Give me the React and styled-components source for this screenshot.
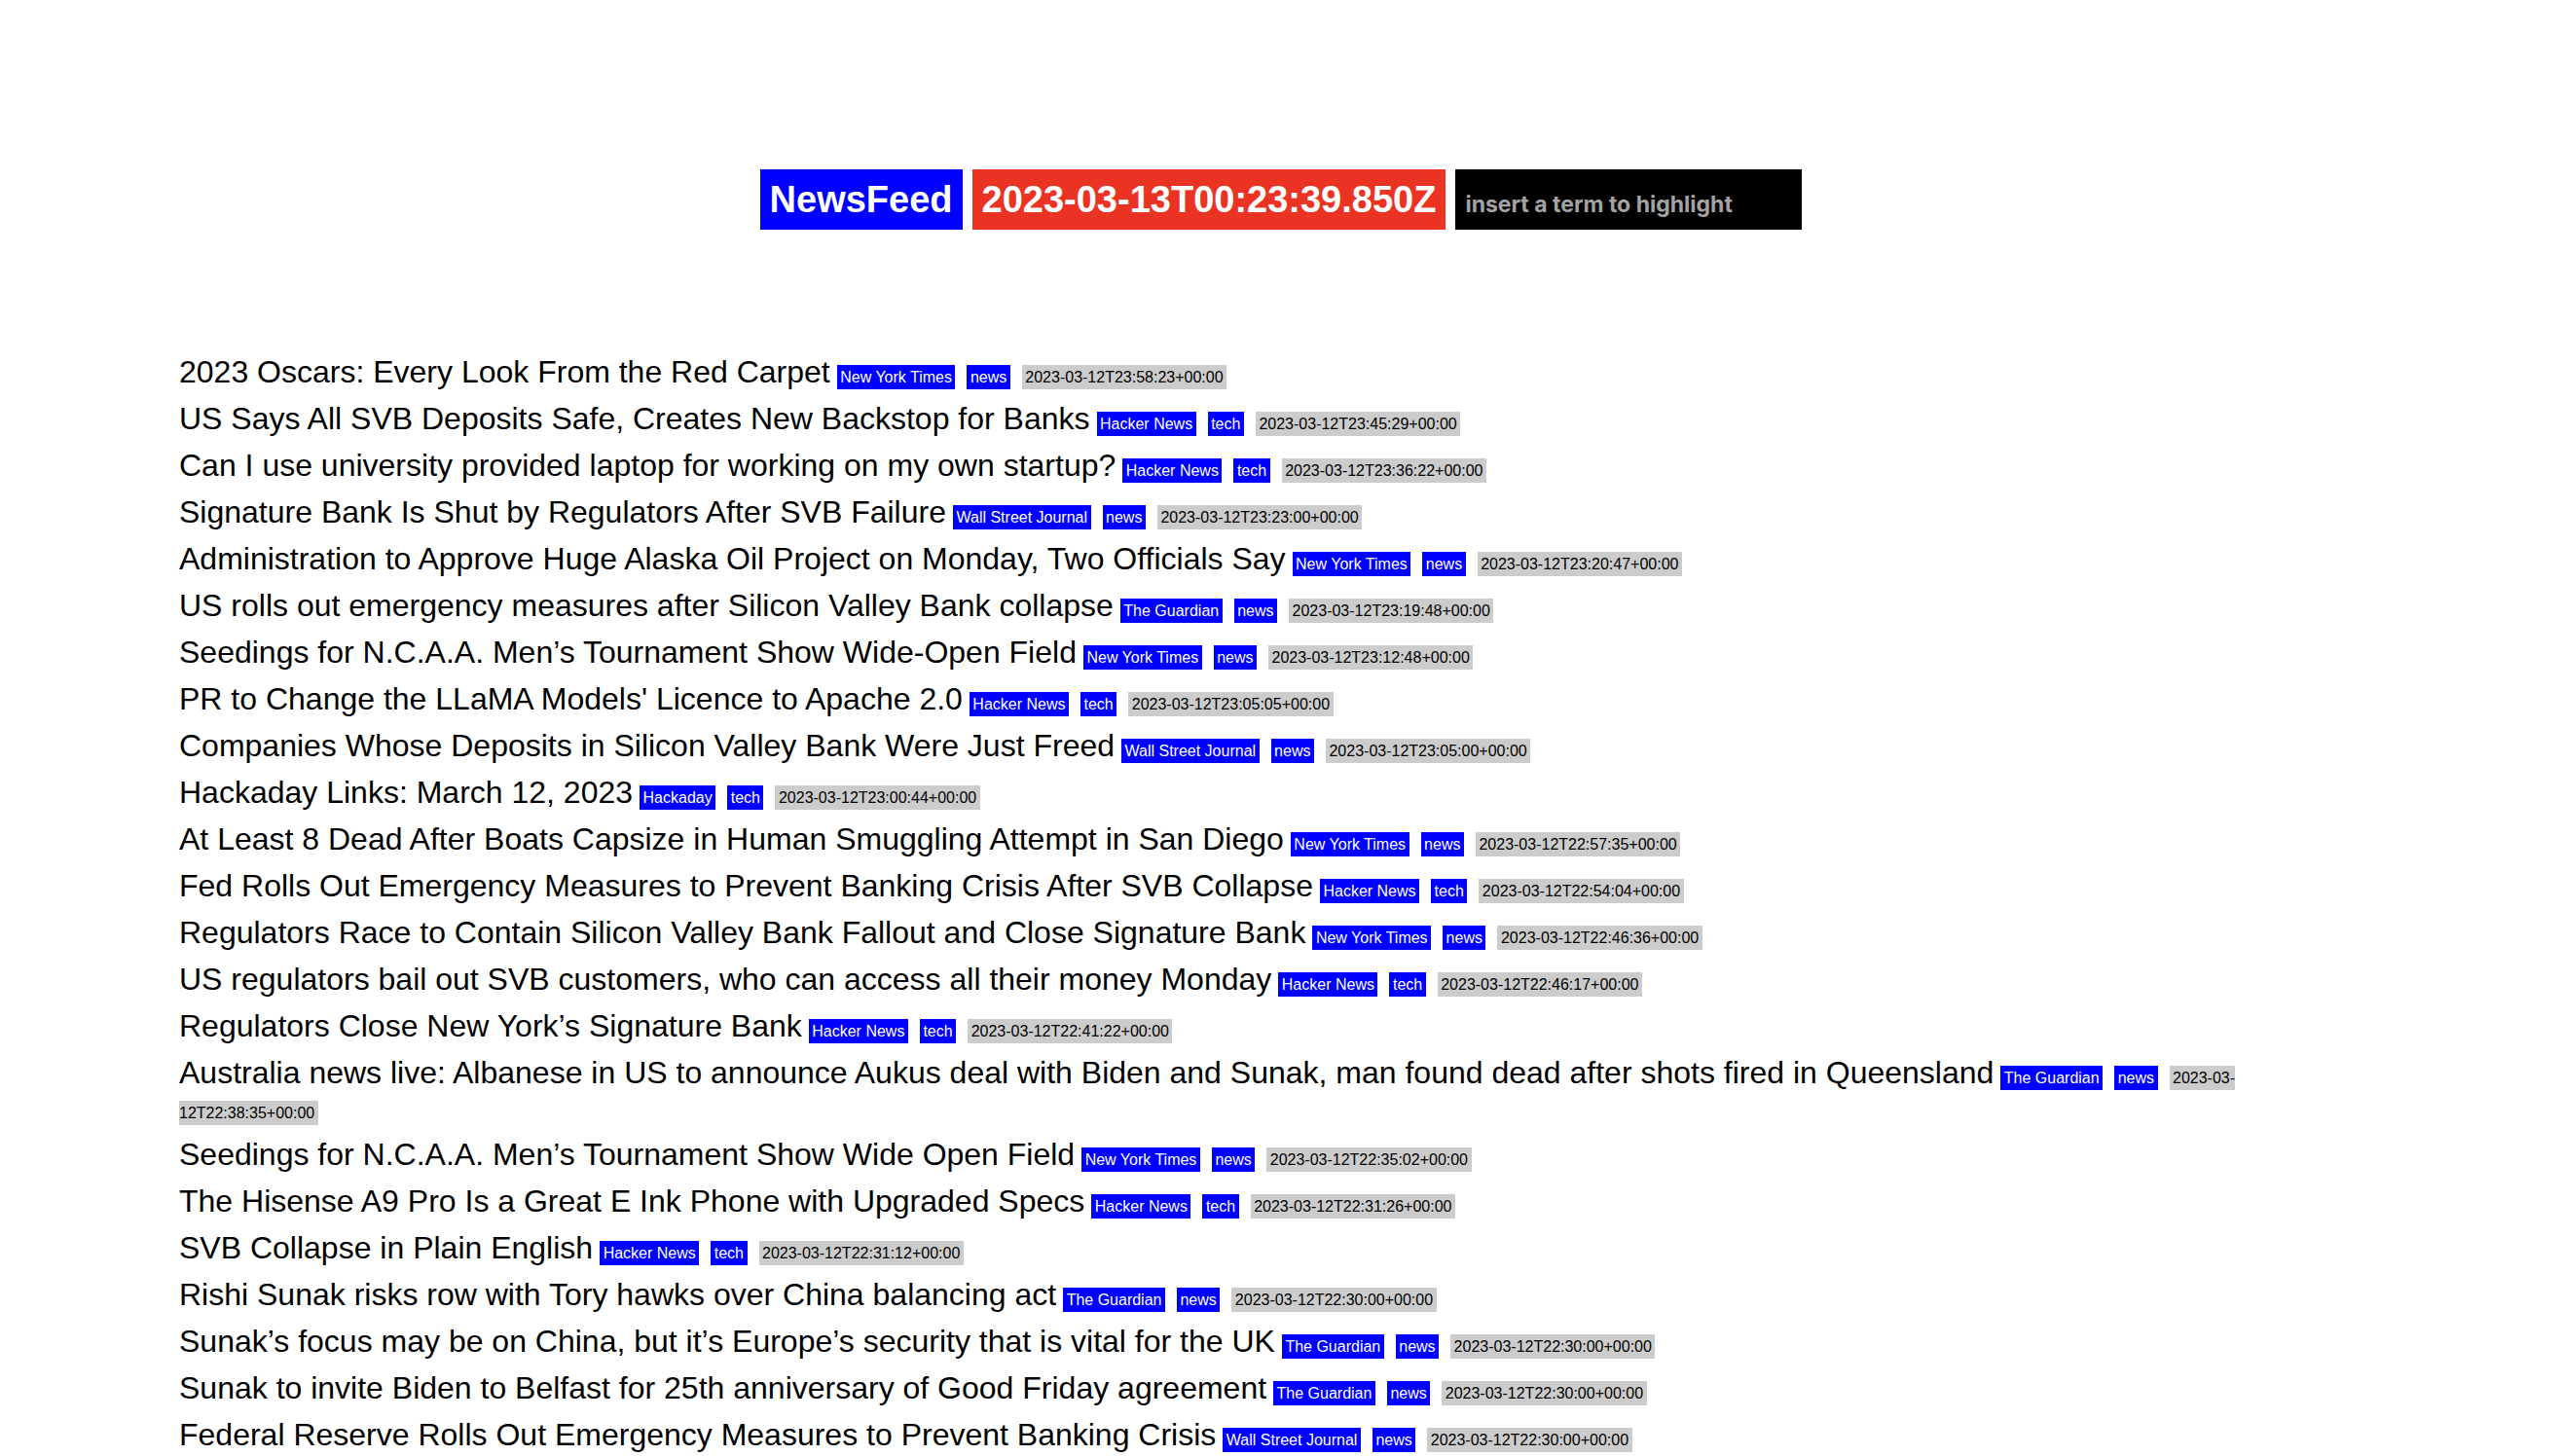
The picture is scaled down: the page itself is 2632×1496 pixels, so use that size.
import React from "react";
import styled, { createGlobalStyle } from "styled-components";

const GlobalStyle = createGlobalStyle`
  html, body {
    margin: 0;
    padding: 0;
    background: #ffffff;
    overflow: hidden;
  }
  body {
    font-family: "Liberation Sans", Arial, Helvetica, sans-serif;
    color: #000000;
  }
`;

const Page = styled.div`
  padding-top: 174px;
`;

const Header = styled.header`
  display: flex;
  justify-content: center;
  align-items: stretch;
  gap: 10px;
  height: 62px;
`;

const Badge = styled.div`
  display: flex;
  align-items: center;
  padding: 0 10px;
  background: ${(p) => p.$bg};
  color: #ffffff;
  font-family: "Liberation Sans", Arial, Helvetica, sans-serif;
  font-weight: 700;
  font-size: 38px;
  white-space: nowrap;
`;

const Search = styled.input`
  box-sizing: border-box;
  width: 356px;
  height: 62px;
  border: none;
  outline: none;
  background: #000000;
  color: #ffffff;
  padding: 10px 10px 0;
  font-family: Inter, "Noto Sans", sans-serif;
  font-weight: 700;
  font-size: 23px;
  &::placeholder {
    color: #a3a3a3;
  }
`;

const List = styled.ul`
  list-style: none;
  margin: 127.5px 0 0;
  padding: 0 232px 0 184px;
`;

const Item = styled.li`
  font-size: 32px;
  line-height: 36px;
  margin: 0 0 12px;
`;

const Title = styled.span`
  color: #000000;
`;

const Tag = styled.span`
  font-size: 16px;
  line-height: normal;
  padding: 4px 3.5px;
  margin-left: 12px;
  background: ${(p) => (p.$muted ? "#cccccc" : "#0000ff")};
  color: ${(p) => (p.$muted ? "#000000" : "#ffffff")};

  ${Title} + & {
    margin-left: 7px;
  }
`;

const items = [
  ["2023 Oscars: Every Look From the Red Carpet", "New York Times", "news", "2023-03-12T23:58:23+00:00"],
  ["US Says All SVB Deposits Safe, Creates New Backstop for Banks", "Hacker News", "tech", "2023-03-12T23:45:29+00:00"],
  ["Can I use university provided laptop for working on my own startup?", "Hacker News", "tech", "2023-03-12T23:36:22+00:00"],
  ["Signature Bank Is Shut by Regulators After SVB Failure", "Wall Street Journal", "news", "2023-03-12T23:23:00+00:00"],
  ["Administration to Approve Huge Alaska Oil Project on Monday, Two Officials Say", "New York Times", "news", "2023-03-12T23:20:47+00:00"],
  ["US rolls out emergency measures after Silicon Valley Bank collapse", "The Guardian", "news", "2023-03-12T23:19:48+00:00"],
  ["Seedings for N.C.A.A. Men’s Tournament Show Wide-Open Field", "New York Times", "news", "2023-03-12T23:12:48+00:00"],
  ["PR to Change the LLaMA Models' Licence to Apache 2.0", "Hacker News", "tech", "2023-03-12T23:05:05+00:00"],
  ["Companies Whose Deposits in Silicon Valley Bank Were Just Freed", "Wall Street Journal", "news", "2023-03-12T23:05:00+00:00"],
  ["Hackaday Links: March 12, 2023", "Hackaday", "tech", "2023-03-12T23:00:44+00:00"],
  ["At Least 8 Dead After Boats Capsize in Human Smuggling Attempt in San Diego", "New York Times", "news", "2023-03-12T22:57:35+00:00"],
  ["Fed Rolls Out Emergency Measures to Prevent Banking Crisis After SVB Collapse", "Hacker News", "tech", "2023-03-12T22:54:04+00:00"],
  ["Regulators Race to Contain Silicon Valley Bank Fallout and Close Signature Bank", "New York Times", "news", "2023-03-12T22:46:36+00:00"],
  ["US regulators bail out SVB customers, who can access all their money Monday", "Hacker News", "tech", "2023-03-12T22:46:17+00:00"],
  ["Regulators Close New York’s Signature Bank", "Hacker News", "tech", "2023-03-12T22:41:22+00:00"],
  ["Australia news live: Albanese in US to announce Aukus deal with Biden and Sunak, man found dead after shots fired in Queensland", "The Guardian", "news", "2023-03-12T22:38:35+00:00"],
  ["Seedings for N.C.A.A. Men’s Tournament Show Wide Open Field", "New York Times", "news", "2023-03-12T22:35:02+00:00"],
  ["The Hisense A9 Pro Is a Great E Ink Phone with Upgraded Specs", "Hacker News", "tech", "2023-03-12T22:31:26+00:00"],
  ["SVB Collapse in Plain English", "Hacker News", "tech", "2023-03-12T22:31:12+00:00"],
  ["Rishi Sunak risks row with Tory hawks over China balancing act", "The Guardian", "news", "2023-03-12T22:30:00+00:00"],
  ["Sunak’s focus may be on China, but it’s Europe’s security that is vital for the UK", "The Guardian", "news", "2023-03-12T22:30:00+00:00"],
  ["Sunak to invite Biden to Belfast for 25th anniversary of Good Friday agreement", "The Guardian", "news", "2023-03-12T22:30:00+00:00"],
  ["Federal Reserve Rolls Out Emergency Measures to Prevent Banking Crisis", "Wall Street Journal", "news", "2023-03-12T22:30:00+00:00"],
];

export default function App() {
  return (
    <>
      <GlobalStyle />
      <Page>
        <Header>
          <Badge $bg="#0000ff">NewsFeed</Badge>
          <Badge $bg="#ea3323">2023-03-13T00:23:39.850Z</Badge>
          <Search placeholder="insert a term to highlight" />
        </Header>
        <List>
          {items.map(([title, source, category, date], i) => (
            <Item key={i}>
              <Title>{title}</Title>
              <Tag>{source}</Tag>
              <Tag>{category}</Tag>
              <Tag $muted>{date}</Tag>
            </Item>
          ))}
        </List>
      </Page>
    </>
  );
}
